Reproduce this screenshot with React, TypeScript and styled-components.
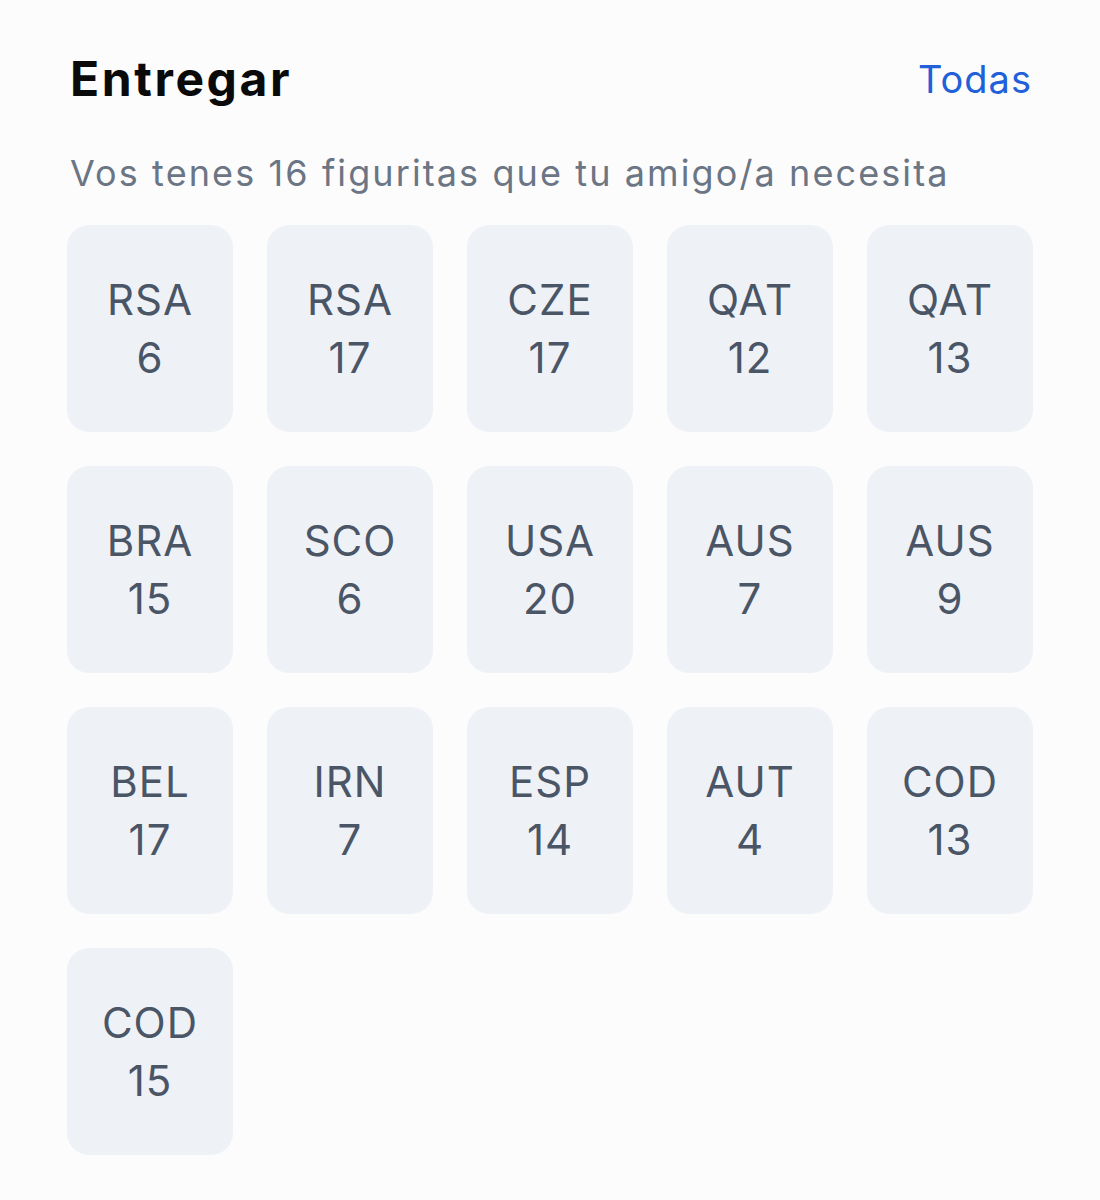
import React from "react";
import styled, { createGlobalStyle } from "styled-components";

const Global = createGlobalStyle`
  html, body { margin: 0; padding: 0; background: #fcfcfd; }
  body { font-family: Inter, "Noto Sans", sans-serif; -webkit-font-smoothing: antialiased; }
`;

const Page = styled.div`
  padding: 50px 68px 40px 67px;
  width: 965px;
`;

const Header = styled.div`
  display: flex;
  align-items: center;
  justify-content: space-between;
`;

const Title = styled.h1`
  margin: 0 0 0 3px;
  font-size: 48px;
  line-height: 58px;
  font-weight: 700;
  color: #0a0a0a;
  letter-spacing: 2.6px;
`;

const Link = styled.a`
  font-size: 38px;
  line-height: 58px;
  color: #2160d8;
  letter-spacing: 1px;
  text-decoration: none;
  cursor: pointer;
`;

const Subtitle = styled.p`
  margin: 44px 0 0 3px;
  font-size: 36px;
  line-height: 42px;
  color: #6b7584;
  letter-spacing: 2.1px;
`;

const Grid = styled.div`
  margin-top: 31px;
  display: grid;
  grid-template-columns: repeat(5, 166px);
  column-gap: 34px;
  row-gap: 34px;
`;

const Card = styled.div`
  height: 207px;
  border-radius: 22px;
  background: #eef1f6;
  display: flex;
  flex-direction: column;
  align-items: center;
  justify-content: center;
  color: #4a5566;
  font-size: 42px;
  line-height: 58px;
  letter-spacing: 1px;
`;

const items: [string, number][] = [
  ["RSA", 6], ["RSA", 17], ["CZE", 17], ["QAT", 12], ["QAT", 13],
  ["BRA", 15], ["SCO", 6], ["USA", 20], ["AUS", 7], ["AUS", 9],
  ["BEL", 17], ["IRN", 7], ["ESP", 14], ["AUT", 4], ["COD", 13],
  ["COD", 15],
];

export default function App() {
  return (
    <>
      <Global />
      <Page>
        <Header>
          <Title>Entregar</Title>
          <Link>Todas</Link>
        </Header>
        <Subtitle>Vos tenes 16 figuritas que tu amigo/a necesita</Subtitle>
        <Grid>
          {items.map(([code, n], i) => (
            <Card key={i}>
              <span>{code}</span>
              <span>{n}</span>
            </Card>
          ))}
        </Grid>
      </Page>
    </>
  );
}
